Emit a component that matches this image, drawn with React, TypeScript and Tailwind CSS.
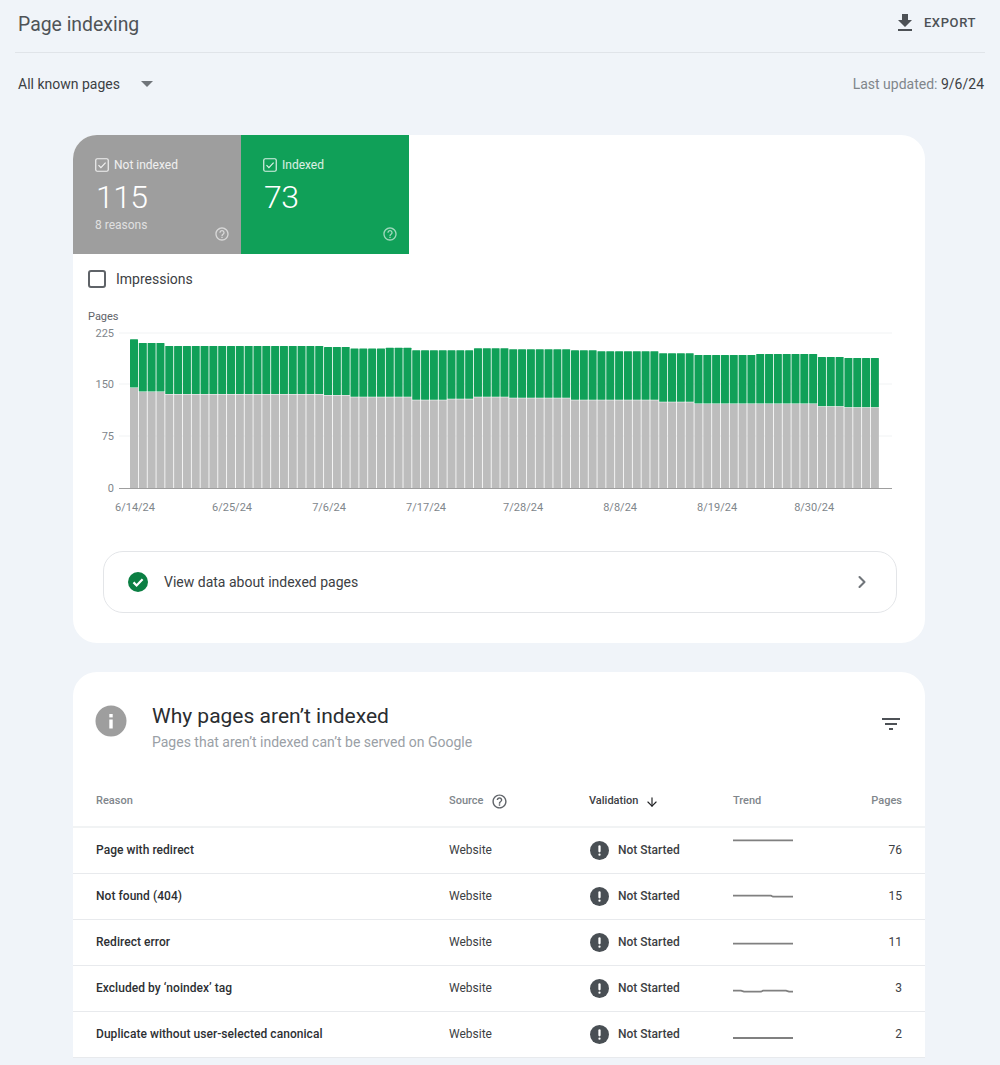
import { ArrowDown, ChevronRight } from "lucide-react";

// chart pixel helpers: 225 pages = 155px
const BAR_GROUPS: [number, number, number][] = [
  [1, 339.3, 388],
  [3, 343, 392],
  [18, 346, 394.5],
  [3, 347, 395.5],
  [4, 348.5, 397.3],
  [3, 347.7, 397.3],
  [4, 350.3, 400.3],
  [3, 350.3, 399.3],
  [4, 348.3, 397.3],
  [7, 349.3, 398.3],
  [3, 350.3, 400.3],
  [7, 351.3, 400.3],
  [4, 353.3, 402.3],
  [7, 355, 404],
  [7, 354, 404],
  [3, 357, 406.7],
  [4, 358, 407.7]
];

const bars = BAR_GROUPS.flatMap(([count, top, grey]) =>
  Array.from({ length: count }, () => ({ top, grey }))
);

const DATE_LABELS = ["6/14/24", "6/25/24", "7/6/24", "7/17/24", "7/28/24", "8/8/24", "8/19/24", "8/30/24"];

// trend y values are measured from the top of the row
const ROWS = [
  { reason: "Page with redirect", pages: 76, trend: "M0 12.3H60" },
  { reason: "Not found (404)", pages: 15, trend: "M0 21.7H38L40 22.7H60" },
  { reason: "Redirect error", pages: 11, trend: "M0 23.7H60" },
  { reason: "Excluded by ‘noindex’ tag", pages: 3, trend: "M0 24.7H8L11 25.7H28L30 24.7H53L56 25.7H60" },
  { reason: "Duplicate without user-selected canonical", pages: 2, trend: "M0 26H60" }
];

function HelpIcon({ className }: { className?: string }) {
  return (
    <svg viewBox="0 0 24 24" className={className} fill="currentColor">
      <path d="M11 18h2v-2h-2v2zm1-16C6.48 2 2 6.48 2 12s4.48 10 10 10 10-4.48 10-10S17.52 2 12 2zm0 18c-4.41 0-8-3.59-8-8s3.59-8 8-8 8 3.59 8 8-3.59 8-8 8zm0-14c-2.21 0-4 1.79-4 4h2c0-1.1.9-2 2-2s2 .9 2 2c0 2-3 1.75-3 5h2c0-2.25 3-2.5 3-5 0-2.21-1.79-4-4-4z" />
    </svg>
  );
}

function CheckBoxIcon() {
  return (
    <svg viewBox="0 0 14 14" className="h-[14px] w-[14px]" fill="none" stroke="currentColor">
      <rect x="0.75" y="0.75" width="12.5" height="12.5" rx="1.5" strokeWidth="1.2" />
      <path d="M3.5 7.2 5.9 9.6 10.6 4.6" strokeWidth="1.2" />
    </svg>
  );
}

function StatTile({
  label,
  value,
  sub,
  className
}: {
  label: string;
  value: string;
  sub?: string;
  className: string;
}) {
  return (
    <div className={`relative h-[119px] w-[168px] px-[22px] pt-[22px] text-white ${className}`}>
      <div className="flex h-4 items-center gap-[5px] text-xs leading-4 text-white/85">
        <CheckBoxIcon />
        {label}
      </div>
      <div className="mt-[5px] ml-[1px] text-[32px] leading-[38px] font-light tracking-[-0.6px]">{value}</div>
      {sub && <div className="mt-[1px] text-xs leading-4 text-white/70">{sub}</div>}
      <HelpIcon className="absolute right-[11px] bottom-[12px] h-4 w-4 text-white/60" />
    </div>
  );
}

function Chart() {
  return (
    <svg viewBox="0 0 852 230" className="mt-[16px] h-[230px] w-[852px]">
      {/* svg origin sits at page x=73, y=305 */}
      <text x="15" y="15" fontSize="11" fill="#5f6368">Pages</text>
      {[
        ["225", 28],
        ["150", 79],
        ["75", 131],
        ["0", 183]
      ].map(([label, y]) => (
        <g key={label}>
          <text x="41" y={Number(y) + 4} fontSize="11" fill="#80868b" textAnchor="end">{label}</text>
          {label !== "0" && <path d={`M46 ${y}H819`} stroke="#f1f3f4" />}
        </g>
      ))}
      {bars.map((bar, i) => {
        const x = 57 + i * 8.82;
        return (
          <g key={i}>
            <rect x={x} y={bar.top - 305} width="8" height={bar.grey - bar.top - 0.5} fill="#10a058" rx="0.5" />
            <rect x={x} y={bar.grey - 305} width="8" height={488 - bar.grey} fill="#bdbdbd" />
          </g>
        );
      })}
      <path d="M46 183.5H819" stroke="#9e9e9e" />
      {DATE_LABELS.map((label, i) => (
        <text key={label} x={62 + i * 97.02} y="206" fontSize="11" fill="#80868b" textAnchor="middle">
          {label}
        </text>
      ))}
    </svg>
  );
}

export default function App() {
  return (
    <div className="h-[1065px] overflow-hidden bg-[#f0f4f9] font-['Roboto',sans-serif] text-[#202124]">
      <header className="mx-[15px] flex h-[53px] items-center justify-between border-b border-[#e0e4e9] pr-[9px] pl-[3px]">
        <h1 className="pb-[3px] text-[19.4px] leading-none text-[#4f5357]">Page indexing</h1>
        <button className="-mt-[6px] flex items-center gap-[7px] text-[13px] font-medium tracking-[0.6px] text-[#4d5156]">
          <svg viewBox="0 0 24 24" className="h-6 w-6" fill="currentColor">
            <path d="M19 9h-4V3H9v6H5l7 7 7-7zM5 18v2h14v-2H5z" />
          </svg>
          EXPORT
        </button>
      </header>

      <div className="flex h-[62px] items-center justify-between pr-[16px] pl-[18px]">
        <div className="flex items-center gap-[21px] text-sm text-[#3c4043]">
          All known pages
          <span className="h-0 w-0 border-x-[6px] border-t-[6px] border-x-transparent border-t-[#70757a]" />
        </div>
        <div className="text-sm text-[#80868b]">
          Last updated: <span className="text-[#3c4043]">9/6/24</span>
        </div>
      </div>

      <main className="mt-[20px] mr-[75px] ml-[73px] flex flex-col gap-[29px]">
        <section className="h-[508px] overflow-hidden rounded-[24px] bg-white">
          <div className="flex">
            <StatTile label="Not indexed" value="115" sub="8 reasons" className="bg-[#9e9e9e]" />
            <StatTile label="Indexed" value="73" className="bg-[#10a058]" />
          </div>
          <div className="mt-[15px] flex h-5 items-center gap-[10px] pl-[15px] text-sm text-[#3c4043]">
            <span className="h-[18px] w-[18px] rounded-[3px] border-2 border-[#5f6368]" />
            Impressions
          </div>
          <Chart />
          <div className="mt-[16px] mr-[28px] ml-[30px] flex h-[62px] items-center justify-between rounded-[20px] border border-[#e3e5e8] px-[24px] text-sm text-[#3c4043]">
            <div className="flex items-center gap-[16px]">
              <svg viewBox="1 1 20 20" className="h-5 w-5">
                <circle cx="11" cy="11" r="10" fill="#0b7f43" />
                <path d="M6.5 11.4 9.6 14.5 15.6 8.2" fill="none" stroke="#fff" strokeWidth="2.2" />
              </svg>
              View data about indexed pages
            </div>
            <ChevronRight className="h-5 w-5 text-[#70757a]" strokeWidth={2.5} />
          </div>
        </section>

        <section className="rounded-t-[24px] bg-white">
          <div className="flex h-[105px] items-start justify-between pt-[33px] pr-[22px] pl-[22px]">
            <div className="flex gap-[25px]">
              <svg viewBox="0 0 32 32" className="h-8 w-8">
                <circle cx="16" cy="16" r="15.5" fill="#9e9e9e" />
                <rect x="14.3" y="14.5" width="3.4" height="9" fill="#fff" />
                <rect x="14.3" y="9" width="3.4" height="3.4" fill="#fff" />
              </svg>
              <div>
                <h2 className="text-[21px] leading-[22px] text-[#2a2d30]">Why pages aren’t indexed</h2>
                <p className="mt-[5px] text-sm leading-[20px] text-[#9aa0a6]">
                  Pages that aren’t indexed can’t be served on Google
                </p>
              </div>
            </div>
            <svg viewBox="0 0 24 24" className="mt-[7px] h-6 w-6 text-[#4d5156]" fill="currentColor">
              <path d="M3 6h18v2H3zM6 11h12v2H6zM10 16h4v2h-4z" />
            </svg>
          </div>

          <div className="flex h-[51px] items-center border-b-2 border-[#f1f3f4] px-[23px] text-[11px] font-medium text-[#80868b]">
            <div className="w-[353px]">Reason</div>
            <div className="flex w-[140px] items-center gap-[8px]">
              Source
              <HelpIcon className="h-[17px] w-[17px] text-[#5f6368]" />
            </div>
            <div className="flex w-[144px] items-center gap-[7px] text-[#3c4043]">
              Validation
              <ArrowDown className="h-[14px] w-[14px] text-[#202124]" />
            </div>
            <div className="flex-1">Trend</div>
            <div>Pages</div>
          </div>

          {ROWS.map((row) => (
            <div
              key={row.reason}
              className="flex h-[46px] items-center border-b border-[#e8eaed] px-[23px] pb-[1px] text-xs text-[#3c4043]"
            >
              <div className="w-[353px] font-medium tracking-[0.05px] text-[#2d3033]">{row.reason}</div>
              <div className="w-[140px]">Website</div>
              <div className="flex w-[144px] items-center gap-[9px] pl-[1px] font-medium">
                <svg viewBox="0 0 20 20" className="h-[19px] w-[19px]">
                  <circle cx="10" cy="10" r="10" fill="#494f54" />
                  <rect x="8.8" y="4.5" width="2.4" height="7.5" rx="1.2" fill="#fff" />
                  <rect x="8.8" y="13.2" width="2.4" height="2.4" rx="1.2" fill="#fff" />
                </svg>
                Not Started
              </div>
              <svg viewBox="0 0 60 46" className="h-[46px] w-[60px] shrink-0 self-start" fill="none">
                <path d={row.trend} stroke="#808080" strokeWidth="1.8" />
              </svg>
              <div className="flex-1 text-right">{row.pages}</div>
            </div>
          ))}
        </section>
      </main>
    </div>
  );
}
